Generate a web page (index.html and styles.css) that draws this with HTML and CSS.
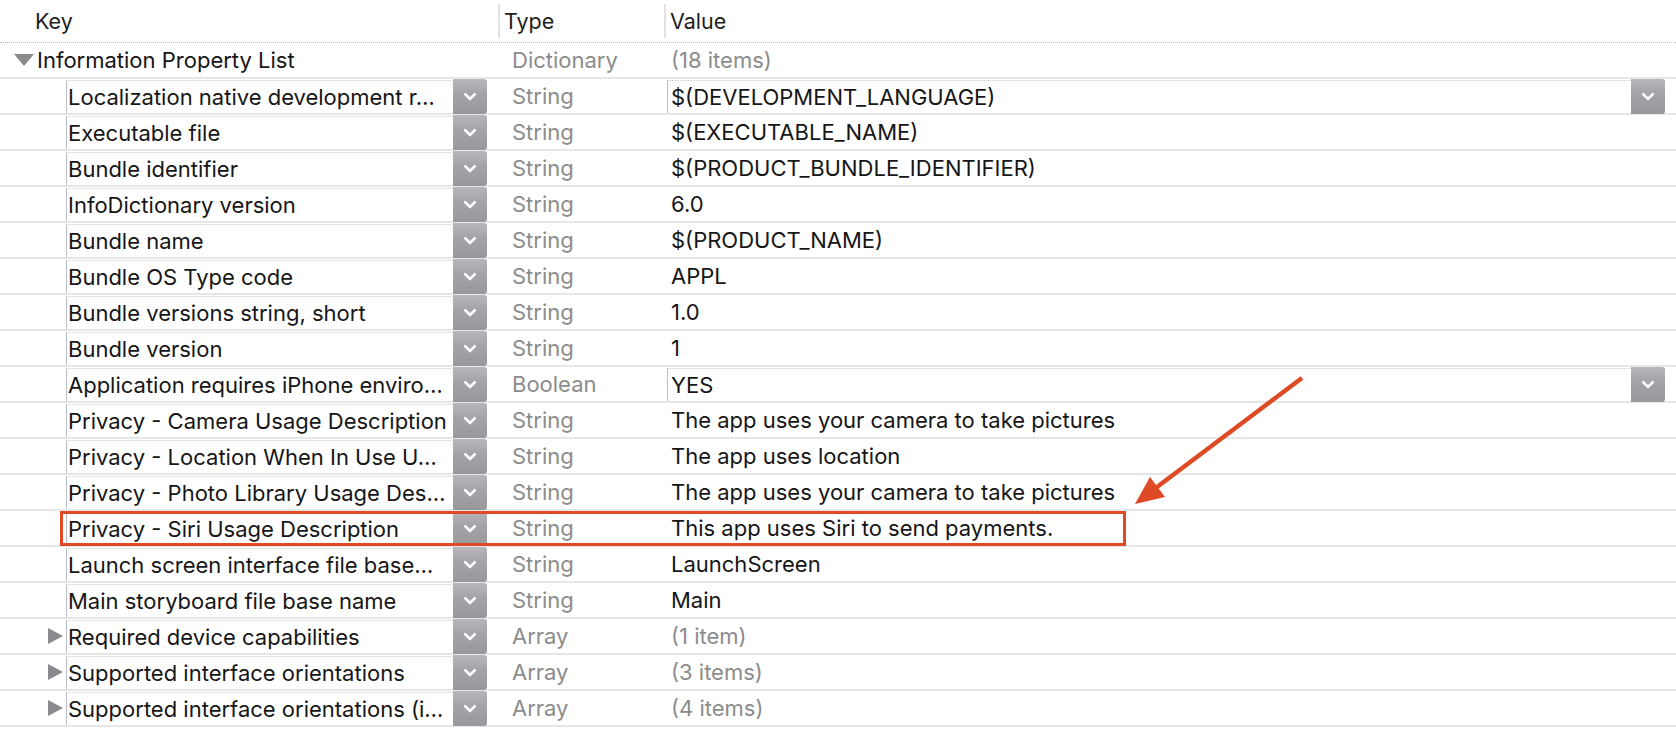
FILE: index.html
```html
<!DOCTYPE html>
<html>
<head>
<meta charset="utf-8">
<link rel="stylesheet" href="styles.css">
</head>
<body>
<div class="plist">
  <div class="head">
    <div class="hcell hkey">Key</div>
    <div class="hcell htype">Type</div>
    <div class="hcell hvalue">Value</div>
  </div>

  <div class="row">
    <div class="kcell root"><span class="tri down"></span><span class="ktext">Information Property List</span></div>
    <div class="tcell">Dictionary</div>
    <div class="vcell muted">(18 items)</div>
  </div>

  <div class="row">
    <div class="kcell"><span class="slot"></span><div class="kbox"><span class="ktext">Localization native development r…</span><span class="pop"><svg viewBox="0 0 14 9" width="14" height="9"><path d="M1.5 1.5 L7 7 L12.5 1.5" fill="none" stroke="#fff" stroke-width="2.6"/></svg></span></div></div>
    <div class="tcell">String</div>
    <div class="vcell"><div class="vbox"><span class="vtext">$(DEVELOPMENT_LANGUAGE)</span><span class="pop"><svg viewBox="0 0 14 9" width="14" height="9"><path d="M1.5 1.5 L7 7 L12.5 1.5" fill="none" stroke="#fff" stroke-width="2.6"/></svg></span></div></div>
  </div>

  <div class="row">
    <div class="kcell"><span class="slot"></span><div class="kbox"><span class="ktext">Executable file</span><span class="pop"><svg viewBox="0 0 14 9" width="14" height="9"><path d="M1.5 1.5 L7 7 L12.5 1.5" fill="none" stroke="#fff" stroke-width="2.6"/></svg></span></div></div>
    <div class="tcell">String</div>
    <div class="vcell">$(EXECUTABLE_NAME)</div>
  </div>

  <div class="row">
    <div class="kcell"><span class="slot"></span><div class="kbox"><span class="ktext">Bundle identifier</span><span class="pop"><svg viewBox="0 0 14 9" width="14" height="9"><path d="M1.5 1.5 L7 7 L12.5 1.5" fill="none" stroke="#fff" stroke-width="2.6"/></svg></span></div></div>
    <div class="tcell">String</div>
    <div class="vcell">$(PRODUCT_BUNDLE_IDENTIFIER)</div>
  </div>

  <div class="row">
    <div class="kcell"><span class="slot"></span><div class="kbox"><span class="ktext">InfoDictionary version</span><span class="pop"><svg viewBox="0 0 14 9" width="14" height="9"><path d="M1.5 1.5 L7 7 L12.5 1.5" fill="none" stroke="#fff" stroke-width="2.6"/></svg></span></div></div>
    <div class="tcell">String</div>
    <div class="vcell">6.0</div>
  </div>

  <div class="row">
    <div class="kcell"><span class="slot"></span><div class="kbox"><span class="ktext">Bundle name</span><span class="pop"><svg viewBox="0 0 14 9" width="14" height="9"><path d="M1.5 1.5 L7 7 L12.5 1.5" fill="none" stroke="#fff" stroke-width="2.6"/></svg></span></div></div>
    <div class="tcell">String</div>
    <div class="vcell">$(PRODUCT_NAME)</div>
  </div>

  <div class="row">
    <div class="kcell"><span class="slot"></span><div class="kbox"><span class="ktext">Bundle OS Type code</span><span class="pop"><svg viewBox="0 0 14 9" width="14" height="9"><path d="M1.5 1.5 L7 7 L12.5 1.5" fill="none" stroke="#fff" stroke-width="2.6"/></svg></span></div></div>
    <div class="tcell">String</div>
    <div class="vcell">APPL</div>
  </div>

  <div class="row">
    <div class="kcell"><span class="slot"></span><div class="kbox"><span class="ktext">Bundle versions string, short</span><span class="pop"><svg viewBox="0 0 14 9" width="14" height="9"><path d="M1.5 1.5 L7 7 L12.5 1.5" fill="none" stroke="#fff" stroke-width="2.6"/></svg></span></div></div>
    <div class="tcell">String</div>
    <div class="vcell">1.0</div>
  </div>

  <div class="row">
    <div class="kcell"><span class="slot"></span><div class="kbox"><span class="ktext">Bundle version</span><span class="pop"><svg viewBox="0 0 14 9" width="14" height="9"><path d="M1.5 1.5 L7 7 L12.5 1.5" fill="none" stroke="#fff" stroke-width="2.6"/></svg></span></div></div>
    <div class="tcell">String</div>
    <div class="vcell">1</div>
  </div>

  <div class="row">
    <div class="kcell"><span class="slot"></span><div class="kbox"><span class="ktext">Application requires iPhone enviro…</span><span class="pop"><svg viewBox="0 0 14 9" width="14" height="9"><path d="M1.5 1.5 L7 7 L12.5 1.5" fill="none" stroke="#fff" stroke-width="2.6"/></svg></span></div></div>
    <div class="tcell">Boolean</div>
    <div class="vcell"><div class="vbox"><span class="vtext">YES</span><span class="pop"><svg viewBox="0 0 14 9" width="14" height="9"><path d="M1.5 1.5 L7 7 L12.5 1.5" fill="none" stroke="#fff" stroke-width="2.6"/></svg></span></div></div>
  </div>

  <div class="row">
    <div class="kcell"><span class="slot"></span><div class="kbox"><span class="ktext">Privacy - Camera Usage Description</span><span class="pop"><svg viewBox="0 0 14 9" width="14" height="9"><path d="M1.5 1.5 L7 7 L12.5 1.5" fill="none" stroke="#fff" stroke-width="2.6"/></svg></span></div></div>
    <div class="tcell">String</div>
    <div class="vcell">The app uses your camera to take pictures</div>
  </div>

  <div class="row">
    <div class="kcell"><span class="slot"></span><div class="kbox"><span class="ktext">Privacy - Location When In Use U…</span><span class="pop"><svg viewBox="0 0 14 9" width="14" height="9"><path d="M1.5 1.5 L7 7 L12.5 1.5" fill="none" stroke="#fff" stroke-width="2.6"/></svg></span></div></div>
    <div class="tcell">String</div>
    <div class="vcell">The app uses location</div>
  </div>

  <div class="row">
    <div class="kcell"><span class="slot"></span><div class="kbox"><span class="ktext">Privacy - Photo Library Usage Des…</span><span class="pop"><svg viewBox="0 0 14 9" width="14" height="9"><path d="M1.5 1.5 L7 7 L12.5 1.5" fill="none" stroke="#fff" stroke-width="2.6"/></svg></span></div></div>
    <div class="tcell">String</div>
    <div class="vcell">The app uses your camera to take pictures</div>
  </div>

  <div class="row highlight">
    <div class="kcell"><span class="slot"></span><div class="kbox"><span class="ktext">Privacy - Siri Usage Description</span><span class="pop"><svg viewBox="0 0 14 9" width="14" height="9"><path d="M1.5 1.5 L7 7 L12.5 1.5" fill="none" stroke="#fff" stroke-width="2.6"/></svg></span></div></div>
    <div class="tcell">String</div>
    <div class="vcell">This app uses Siri to send payments.</div>
    <div class="mark"></div>
  </div>

  <div class="row">
    <div class="kcell"><span class="slot"></span><div class="kbox"><span class="ktext">Launch screen interface file base…</span><span class="pop"><svg viewBox="0 0 14 9" width="14" height="9"><path d="M1.5 1.5 L7 7 L12.5 1.5" fill="none" stroke="#fff" stroke-width="2.6"/></svg></span></div></div>
    <div class="tcell">String</div>
    <div class="vcell">LaunchScreen</div>
  </div>

  <div class="row">
    <div class="kcell"><span class="slot"></span><div class="kbox"><span class="ktext">Main storyboard file base name</span><span class="pop"><svg viewBox="0 0 14 9" width="14" height="9"><path d="M1.5 1.5 L7 7 L12.5 1.5" fill="none" stroke="#fff" stroke-width="2.6"/></svg></span></div></div>
    <div class="tcell">String</div>
    <div class="vcell">Main</div>
  </div>

  <div class="row">
    <div class="kcell"><span class="slot"><span class="tri right"></span></span><div class="kbox"><span class="ktext">Required device capabilities</span><span class="pop"><svg viewBox="0 0 14 9" width="14" height="9"><path d="M1.5 1.5 L7 7 L12.5 1.5" fill="none" stroke="#fff" stroke-width="2.6"/></svg></span></div></div>
    <div class="tcell">Array</div>
    <div class="vcell muted">(1 item)</div>
  </div>

  <div class="row">
    <div class="kcell"><span class="slot"><span class="tri right"></span></span><div class="kbox"><span class="ktext">Supported interface orientations</span><span class="pop"><svg viewBox="0 0 14 9" width="14" height="9"><path d="M1.5 1.5 L7 7 L12.5 1.5" fill="none" stroke="#fff" stroke-width="2.6"/></svg></span></div></div>
    <div class="tcell">Array</div>
    <div class="vcell muted">(3 items)</div>
  </div>

  <div class="row">
    <div class="kcell"><span class="slot"><span class="tri right"></span></span><div class="kbox"><span class="ktext">Supported interface orientations (i…</span><span class="pop"><svg viewBox="0 0 14 9" width="14" height="9"><path d="M1.5 1.5 L7 7 L12.5 1.5" fill="none" stroke="#fff" stroke-width="2.6"/></svg></span></div></div>
    <div class="tcell">Array</div>
    <div class="vcell muted">(4 items)</div>
  </div>

  <svg class="arrow" width="220" height="150" viewBox="0 0 220 150">
    <line x1="202" y1="12" x2="55" y2="122.5" stroke="#de4a26" stroke-width="4.5" stroke-linecap="butt"/>
    <polygon points="35,138 50,111 65,131" fill="#de4a26"/>
  </svg>
</div>
</body>
</html>
```

FILE: styles.css
```css
html, body {
  margin: 0;
  padding: 0;
  background: #ffffff;
}

body {
  font-family: "Inter", "Liberation Sans", sans-serif;
  font-size: 22px;
  color: #161616;
}

.plist {
  position: relative;
  width: 1676px;
}

.head {
  display: grid;
  grid-template-columns: 498px 166px 1fr;
  height: 42px;
  border-bottom: 1px dotted #b9bcc2;
  align-items: center;
  font-size: 21.5px;
}

.hcell {
  height: 34px;
  display: flex;
  align-items: center;
  color: #1e1e1e;
}

.hkey {
  padding-left: 35px;
}

.htype,
.hvalue {
  border-left: 2px solid #e2e2e2;
  padding-left: 4px;
}

.row {
  position: relative;
  display: grid;
  grid-template-columns: 498px 166px 1fr;
  height: 34px;
  border-bottom: 2px solid #e6e6e6;
}

.kcell {
  display: flex;
  align-items: stretch;
}

.kcell.root {
  align-items: center;
  padding-left: 14px;
}

.kcell.root .ktext {
  padding-left: 3px;
}

.slot {
  width: 66px;
  flex: none;
  display: flex;
  align-items: center;
  justify-content: flex-end;
  padding-right: 3px;
  box-sizing: border-box;
}

.tri {
  display: block;
  width: 0;
  height: 0;
}

.tri.down {
  border-left: 10px solid transparent;
  border-right: 10px solid transparent;
  border-top: 12px solid #8a8a8e;
}

.tri.right {
  border-top: 8.5px solid transparent;
  border-bottom: 8.5px solid transparent;
  border-left: 15px solid #8a8a8e;
}

.kbox {
  width: 421px;
  flex: none;
  display: flex;
  align-items: stretch;
  border-left: 1px solid #b9c0cc;
  border-top: 1px dotted #c7cbd2;
  box-sizing: border-box;
  margin-top: 1px;
  background: #fff;
}

.ktext {
  flex: 1;
  display: flex;
  align-items: center;
  padding-left: 1px;
  white-space: nowrap;
  overflow: hidden;
}

.pop {
  width: 34px;
  flex: none;
  display: flex;
  align-items: center;
  justify-content: center;
  background: linear-gradient(#b7b6bb 0%, #a3a2a7 45%, #99989d 100%);
  border-radius: 0 3px 3px 0;
  margin-top: -2px;
  margin-bottom: -1px;
}

.tcell {
  display: flex;
  align-items: center;
  padding-left: 14px;
  color: #8c8c8c;
}

.vcell {
  display: flex;
  align-items: center;
  padding-left: 7px;
  color: #161616;
  white-space: nowrap;
}

.vcell.muted {
  color: #8c8c8c;
}

.vbox {
  align-self: stretch;
  flex: 1;
  display: flex;
  align-items: stretch;
  margin-left: -4px;
  margin-right: 11px;
  margin-top: 1px;
  border-left: 1px solid #b9c0cc;
  border-top: 1px dotted #c7cbd2;
}

.vtext {
  flex: 1;
  display: flex;
  align-items: center;
  padding-left: 3px;
}

.mark {
  position: absolute;
  left: 60px;
  top: 0;
  width: 1066px;
  height: 35px;
  border: 3px solid #de4a26;
  box-sizing: border-box;
  pointer-events: none;
}

.arrow {
  position: absolute;
  left: 1100px;
  top: 366px;
}
```
